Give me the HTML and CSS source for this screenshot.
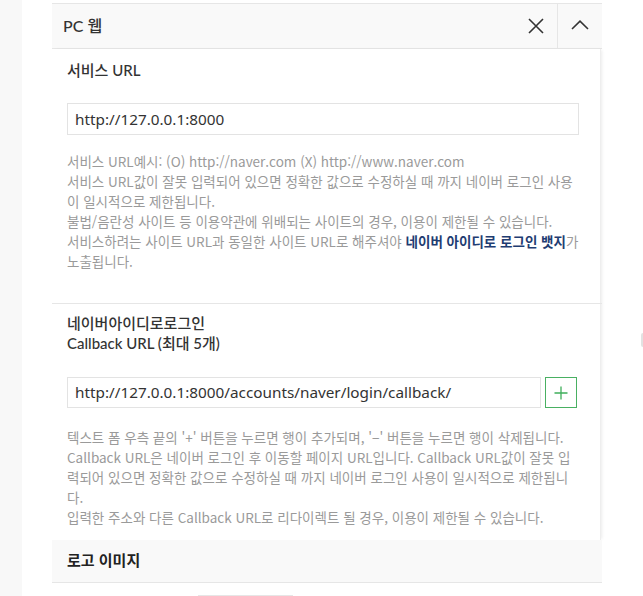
FILE: index.html
```html
<!DOCTYPE html>
<html lang="ko">
<head>
<meta charset="utf-8">
<link rel="stylesheet" href="styles.css">
</head>
<body>
<div class="side"></div>
<div class="main">
  <div class="panel-head">
    <div class="title">PC 웹</div>
    <button class="icon-btn close" aria-label="삭제">
      <svg width="16" height="16" viewBox="0 0 16 16"><path d="M1 1L15 15M15 1L1 15" stroke="#333" stroke-width="1.6" fill="none"/></svg>
    </button>
    <button class="icon-btn toggle" aria-label="접기">
      <svg width="18" height="10" viewBox="0 0 18 10"><path d="M1 9L9 1.2L17 9" stroke="#333" stroke-width="1.6" fill="none"/></svg>
    </button>
  </div>
  <div class="panel-body">
    <section class="field first">
      <div class="label">서비스 URL</div>
      <div class="input-row">
        <div class="input">http://127.0.0.1:8000</div>
      </div>
      <p class="help">서비스 URL예시: (O) http://naver.com (X) http://www.naver.com<br>서비스 URL값이 잘못 입력되어 있으면 정확한 값으로 수정하실 때 까지 네이버 로그인 사용<br>이 일시적으로 제한됩니다.<br>불법/음란성 사이트 등 이용약관에 위배되는 사이트의 경우, 이용이 제한될 수 있습니다.<br>서비스하려는 사이트 URL과 동일한 사이트 URL로 해주셔야 <a class="strong">네이버 아이디로 로그인 뱃지</a>가<br>노출됩니다.</p>
    </section>
    <section class="field second">
      <div class="label">네이버아이디로로그인<br>Callback URL (최대 5개)</div>
      <div class="input-row">
        <div class="input grow">http://127.0.0.1:8000/accounts/naver/login/callback/</div>
        <button class="add" aria-label="추가">
          <svg width="14" height="14" viewBox="0 0 14 14"><path d="M7 0.5V13.5M0.5 7H13.5" stroke="#3fae5b" stroke-width="1.3" fill="none"/></svg>
        </button>
      </div>
      <p class="help">텍스트 폼 우측 끝의 '+' 버튼을 누르면 행이 추가되며, '−' 버튼을 누르면 행이 삭제됩니다.<br>Callback URL은 네이버 로그인 후 이동할 페이지 URL입니다. Callback URL값이 잘못 입<br>력되어 있으면 정확한 값으로 수정하실 때 까지 네이버 로그인 사용이 일시적으로 제한됩니<br>다.<br>입력한 주소와 다른 Callback URL로 리다이렉트 될 경우, 이용이 제한될 수 있습니다.</p>
    </section>
  </div>
  <div class="sub-head">로고 이미지</div>
  <div class="sub-body"><div class="logo-box"></div></div>
</div>
<div class="edge-mark"></div>
</body>
</html>
```
FILE: styles.css
```css
html, body {
  margin: 0;
  padding: 0;
  height: 596px;
  overflow: hidden;
  background: #fff;
}
body {
  display: flex;
  font-family: "Noto Sans CJK KR", "Noto Sans", sans-serif;
  color: #333;
  position: relative;
}
.side {
  width: 22px;
  flex: none;
  background: #f8f8f8;
}
.main {
  margin-left: 30px;
  padding-top: 3px;
  width: 550px;
  flex: none;
}
.panel-head {
  display: flex;
  align-items: stretch;
  height: 44px;
  background: #f9f9f9;
  border-top: 1px solid #e6e6e6;
  border-bottom: 1px solid #e6e6e6;
}
.title {
  flex: 1;
  padding-left: 11px;
  font-family: "Lato", "Noto Sans CJK KR", sans-serif;
  font-size: 16px;
  line-height: 44px;
  font-weight: 500;
  color: #333;
}
.icon-btn {
  border: 0;
  background: transparent;
  padding: 0;
  display: flex;
  align-items: center;
  justify-content: center;
  cursor: pointer;
}
.icon-btn.close {
  width: 46px;
  border-right: 1px solid #e6e6e6;
  padding-left: 2px;
}
.icon-btn.toggle {
  width: 44px;
  padding-bottom: 2px;
}
.panel-body {
  width: 548px;
  box-shadow: 2px 0 3px -1px rgba(0,0,0,0.08);
  border-right: 1px solid #eee;
}
.field {
  padding-left: 15px;
  padding-right: 23px;
}
.field.first {
  padding-top: 11px;
  padding-bottom: 32px;
  border-bottom: 1px solid #e6e6e6;
  margin-right: -2px;
}
.field.second {
  padding-top: 9px;
  padding-bottom: 13px;
}
.label {
  font-family: "Lato", "Noto Sans CJK KR", sans-serif;
  font-size: 15px;
  line-height: 20px;
  font-weight: 500;
  color: #333;
}
.input-row {
  display: flex;
  gap: 4px;
  margin-top: 23px;
}
.second .input-row {
  margin-top: 24px;
}
.input {
  flex: 1;
  height: 30px;
  border: 1px solid #e3e3e3;
  padding-left: 7px;
  font-family: "Noto Sans", sans-serif;
  font-size: 15.3px;
  line-height: 30px;
  color: #333;
  white-space: nowrap;
  overflow: hidden;
}
.second .input { height: 29px; line-height: 29px; }
.add {
  width: 32px;
  height: 31px;
  box-sizing: border-box;
  border: 1px solid #49b062;
  background: #fff;
  padding: 0;
  display: flex;
  align-items: center;
  justify-content: center;
}
.help {
  margin: 16px 0 0;
  font-size: 13.5px;
  line-height: 20px;
  color: #9a9a9a;
  white-space: nowrap;
}
.second .help { margin-top: 19px; }
.strong {
  color: #1f3d72;
  font-weight: 700;
}
.sub-head {
  height: 42px;
  background: #f9f9f9;
  border-bottom: 1px solid #e6e6e6;
  padding-left: 15px;
  font-size: 15px;
  font-weight: 700;
  line-height: 40px;
  color: #222;
}
.sub-body {
  padding: 12px 0 0 146px;
  height: 1px;
  overflow: hidden;
}
.logo-box {
  width: 93px;
  height: 40px;
  border: 1px solid #e6e6e6;
}
.edge-mark {
  position: absolute;
  left: 641px;
  top: 333px;
  width: 4px;
  height: 14px;
  border-radius: 2px;
  background: #e2e2e2;
}
```
